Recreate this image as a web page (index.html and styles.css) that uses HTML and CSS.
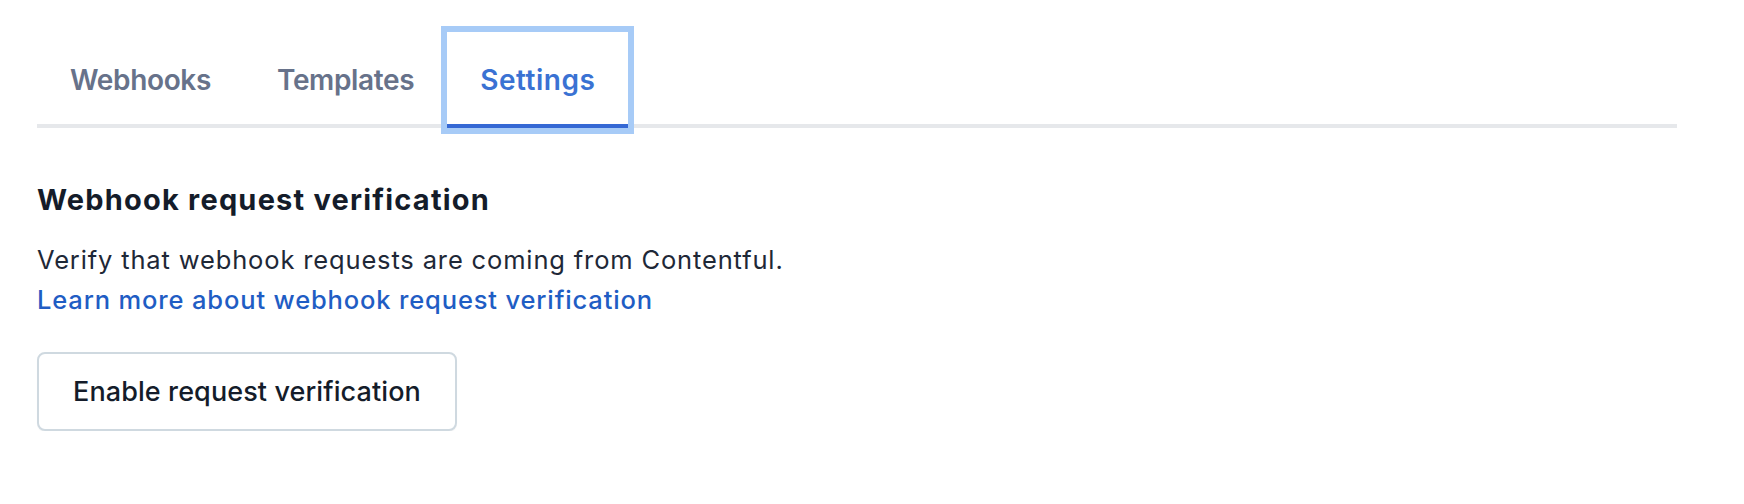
FILE: index.html
```html
<!DOCTYPE html>
<html lang="en">
<head>
<meta charset="utf-8">
<title>Webhook settings</title>
<link rel="stylesheet" href="styles.css">
</head>
<body>
<main class="page">
  <nav class="tabs" role="tablist">
    <div class="tab" role="tab">Webhooks</div>
    <div class="tab" role="tab">Templates</div>
    <div class="tab tab-active" role="tab" aria-selected="true">Settings</div>
  </nav>
  <section class="section">
    <h2 class="heading">Webhook request verification</h2>
    <p class="text">Verify that webhook requests are coming from Contentful.<br><a class="link" href="#">Learn more about webhook request verification</a></p>
    <button class="btn" type="button">Enable request verification</button>
  </section>
</main>
</body>
</html>
```
FILE: styles.css
```css
html, body {
  margin: 0;
  padding: 0;
  background: #ffffff;
}
body {
  font-family: Inter, "Noto Sans", sans-serif;
  color: #1b2533;
}
.page {
  width: 1640px;
  padding: 32px 0 0 37px;
}
.tabs {
  display: flex;
  box-shadow: inset 0 -4px 0 #e6e8eb;
}
.tab {
  height: 96px;
  padding: 0 33px;
  display: flex;
  align-items: center;
  font-size: 28px;
  font-weight: 600;
  letter-spacing: -0.35px;
  color: #67728a;
}
.tab-active {
  color: #3a72d3;
  letter-spacing: 0.5px;
  box-shadow: inset 0 -4px 0 #3568d4, 0 0 0 6px #a7cbf7;
}
.section {
  padding-top: 52px;
}
.heading {
  margin: 0;
  font-size: 29px;
  line-height: 40px;
  font-weight: 700;
  letter-spacing: 1.2px;
  color: #141c2a;
}
.text {
  margin: 20px 0 0;
  font-size: 25.5px;
  line-height: 40px;
  letter-spacing: 0.85px;
  color: #1e2837;
}
.link {
  color: #1f5dc4;
  text-decoration: none;
  font-weight: 500;
}
.btn {
  margin-top: 32px;
  box-sizing: border-box;
  height: 79px;
  padding: 0 34px;
  border: 2px solid #cfd9e0;
  border-radius: 8px;
  background: #ffffff;
  font-family: Inter, "Noto Sans", sans-serif;
  font-size: 27px;
  font-weight: 500;
  letter-spacing: 0.1px;
  color: #141c2a;
  box-shadow: 0 1px 1px rgba(0,0,0,0.04);
}
```
